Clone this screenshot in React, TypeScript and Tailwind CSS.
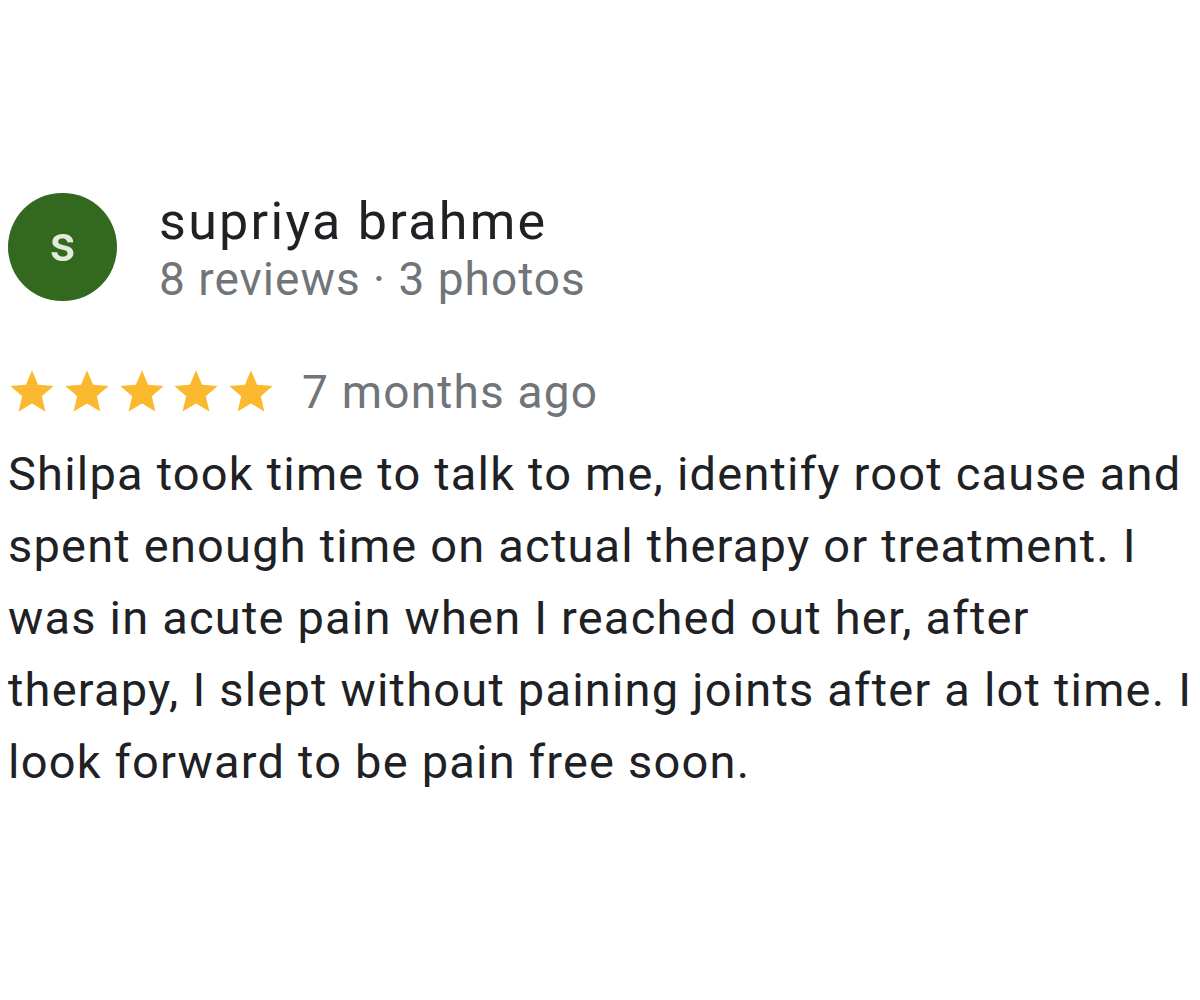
import React from "react";

const Star = () => (
  <svg width="52" height="52" viewBox="0 0 24 24" className="shrink-0 block">
    <path
      fill="#fbb92f"
      d="M12 17.27L18.18 21l-1.64-7.03L22 9.24l-7.19-.61L12 2 9.19 8.63 2 9.24l5.46 4.73L5.82 21z"
    />
  </svg>
);

export default function App() {
  return (
    <div
      className="w-[1200px] h-[1000px] bg-white pl-[8px] pt-[193px]"
      style={{ fontFamily: "Roboto, 'Liberation Sans', sans-serif" }}
    >
      <div className="flex items-start gap-[42px]">
        <div className="w-[109px] h-[108px] rounded-full bg-[#33691e] flex items-center justify-center shrink-0">
          <span className="text-[50px] leading-none font-medium text-[#e3ecdc] -mt-[6px]">s</span>
        </div>
        <div className="flex flex-col">
          <div className="text-[52px] leading-[58px] tracking-[2.3px] text-[#202124] whitespace-nowrap">supriya brahme</div>
          <div className="text-[46px] leading-[56px] tracking-[1px] text-[#70757a] whitespace-nowrap">8 reviews · 3 photos</div>
        </div>
      </div>
      <div className="flex items-center mt-[60px] h-[50px]">
        <div className="flex gap-[2.75px] -ml-[2px]">
          <Star />
          <Star />
          <Star />
          <Star />
          <Star />
        </div>
        <div className="ml-[25px] text-[46px] leading-[50px] tracking-[1.2px] text-[#70757a] whitespace-nowrap">7 months ago</div>
      </div>
      <div className="mt-[21px] text-[47px] leading-[72px] tracking-[1.2px] text-[#202124] whitespace-nowrap">
        Shilpa took time to talk to me, identify root cause and
        <br />
        spent enough time on actual therapy or treatment. I
        <br />
        was in acute pain when I reached out her, after
        <br />
        therapy, I slept without paining joints after a lot time. I
        <br />
        look forward to be pain free soon.
      </div>
    </div>
  );
}
